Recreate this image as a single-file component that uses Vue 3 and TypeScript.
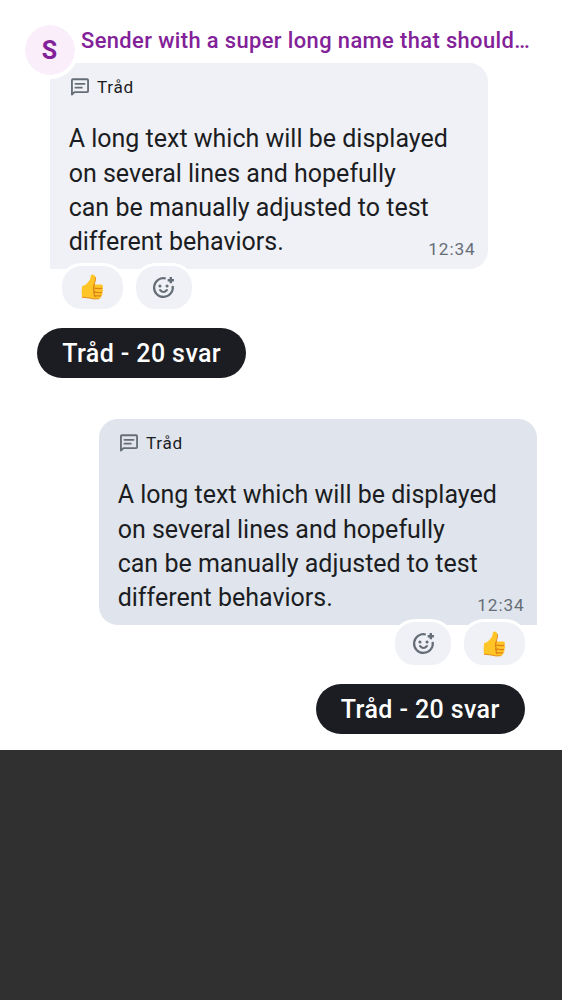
<script setup lang="ts">
interface Message {
  id: number
  mine: boolean
}

const messages: Message[] = [
  { id: 1, mine: false },
  { id: 2, mine: true },
]
const lines: string[] = [
  'A long text which will be displayed',
  'on several lines and hopefully',
  'can be manually adjusted to test',
  'different behaviors.',
]
</script>

<template>
  <main class="screen">
    <section class="timeline">
      <article v-for="m in messages" :key="m.id" class="message" :class="{ mine: m.mine }">
        <header v-if="!m.mine" class="sender">
          <span class="avatar">S</span>
          <span class="name">Sender with a super long name that should…</span>
        </header>
        <div class="bubble">
          <div class="thread-label">
            <svg class="thread-icon" viewBox="0 0 24 24">
              <path d="M3.2 20.2V4.5Q3.2 3.5 4.2 3.5H19.8Q20.8 3.5 20.8 4.5V16.5Q20.8 17.5 19.8 17.5H6Z" fill="none" stroke="currentColor" stroke-width="2" stroke-linejoin="round" />
              <path d="M7 8.5H17M7 12.7H14" fill="none" stroke="currentColor" stroke-width="2" stroke-linecap="round" />
            </svg>
            <span>Tråd</span>
          </div>
          <p class="body"><span v-for="line in lines" :key="line">{{ line }}</span></p>
          <time class="time">12:34</time>
        </div>
        <div class="reactions">
          <button class="pill thumb">
            <svg class="thumb-icon" viewBox="0 0 24 27">
              <path d="M1.2 12.4Q4.2 12 6.2 9.8L9.5 5.7L10.2 2Q10.7.5 12.3.6Q14.5.8 15 3.2Q15.4 5.8 14 9.8L14 11H21Q23.2 11.3 23 13.3Q22.9 14.5 21.9 15Q23.3 15.7 23.1 17.3Q23 18.6 21.7 19.1Q22.8 19.9 22.4 21.3Q22 22.5 20.8 22.7Q21.4 25.4 18.8 25.8Q13 26.6 8.4 25L1 24.2Q.2 18 1.2 12.4Z" fill="#ffc526" />
              <path d="M14 11Q12.6 12.2 13.4 14Q12.3 15.6 13.6 17.2Q12.6 18.8 13.9 20.4Q12.9 22.2 14.4 23.5M14 14.8Q18 15.4 21.9 15M14.1 18.9Q18 19.6 21.7 19.1M14.4 22.6Q18 23.2 20.8 22.7" fill="none" stroke="#dc8218" stroke-width="1.3" stroke-linecap="round" />
              <path d="M1 24.2L8.4 25Q13 26.6 18.8 25.8M14 10.5Q15.6 5.8 15 3.2" fill="none" stroke="#e58c19" stroke-width="1" />
            </svg>
          </button>
          <button class="pill add">
            <svg class="add-icon" viewBox="0 0 24 24">
              <path d="M14.2 3.3A9 9 0 1 0 20.8 10.4" fill="none" stroke="currentColor" stroke-width="2.1" />
              <path d="M19 2V8M16 5H22" fill="none" stroke="currentColor" stroke-width="2.3" />
              <circle cx="8.6" cy="10.5" r="1.5" fill="currentColor" />
              <circle cx="15.4" cy="10.5" r="1.5" fill="currentColor" />
              <path d="M8.7 14.4Q12 18.2 15.3 14.4" fill="none" stroke="currentColor" stroke-width="2" stroke-linecap="round" />
            </svg>
          </button>
        </div>
        <button class="replies">Tråd - 20 svar</button>
      </article>
    </section>
  </main>
</template>

<style>
html, body { margin: 0; background: #303030; }
</style>

<style scoped>
.screen {
  width: 562px;
  height: 1000px;
  overflow: hidden;
  background: #303030;
  font-family: Roboto, "Liberation Sans", sans-serif;
  color: #1b1d22;
}
.timeline { box-sizing: border-box; height: 750px; padding-top: 25px; background: #fff; }
.message { display: flex; flex-direction: column; align-items: flex-start; }
.message.mine { align-items: flex-end; margin-top: 41px; }
.sender { position: relative; z-index: 1; height: 38px; width: 562px; }
.avatar {
  position: absolute;
  left: 20.5px;
  top: -4.5px;
  width: 50px;
  height: 50px;
  border: 4.5px solid #fff;
  border-radius: 50%;
  background: #faeefb;
  background-clip: padding-box;
  color: #822198;
  font-weight: 700;
  font-size: 25px;
  line-height: 52px;
  text-align: center;
}
.name {
  display: block;
  position: relative;
  margin-left: 81px;
  white-space: nowrap;
  color: #822198;
  font-weight: 500;
  font-size: 21.9px;
  line-height: 32px;
  letter-spacing: 0.39px;
}
.bubble {
  position: relative;
  box-sizing: border-box;
  width: 438px;
  height: 205.6px;
  margin-left: 50px;
  padding: 11.5px 18.7px 0;
  border-radius: 18.7px 18.7px 18.7px 0;
  background: #f0f1f6;
}
.mine .bubble { margin: 0 25px 0 0; border-radius: 18.7px 18.7px 0 18.7px; background: #e0e5ed; }
.thread-label { display: flex; align-items: center; gap: 6.2px; height: 24px; font-size: 17.2px; letter-spacing: 0.7px; }
.thread-icon { width: 22px; height: 22px; color: #656d77; }
.body { margin: 23.7px 0 0; font-size: 25px; line-height: 34.35px; letter-spacing: 0; }
.body span { display: block; white-space: nowrap; }
.time {
  position: absolute;
  right: 12.4px;
  bottom: 9px;
  color: #656d77;
  font-size: 17.2px;
  line-height: 22px;
  letter-spacing: 0.9px;
}
.reactions { position: relative; display: flex; gap: 6.2px; margin: -6px 0 0 59.4px; }
.mine .reactions { flex-direction: row-reverse; margin: -6px 34.4px 0 0; }
.pill {
  display: flex;
  align-items: center;
  justify-content: center;
  box-sizing: border-box;
  height: 49.6px;
  padding: 0;
  border: 3.1px solid #fff;
  border-radius: 23px;
  background: #f0f1f6;
}
.thumb { width: 67px; }
.add { width: 62.4px; color: #656d77; }
.thumb-icon { width: 23px; height: 25.9px; }
.add-icon { width: 25px; height: 25px; }
.replies {
  width: 208.6px;
  height: 50px;
  margin: 16px 0 0 37.4px;
  padding: 1px 0 0;
  border: 0;
  border-radius: 25px;
  background: #1b1d22;
  color: #fff;
  font: 500 25px/49px Roboto, "Liberation Sans", sans-serif;
  letter-spacing: 0.4px;
}
.mine .replies { margin: 16px 37.4px 0 0; }
</style>
